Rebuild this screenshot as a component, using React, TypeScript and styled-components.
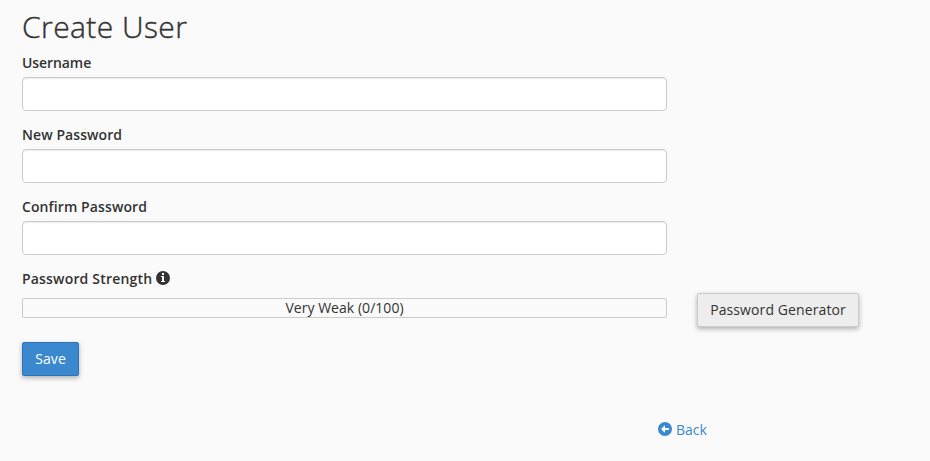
import React from "react";
import styled, { createGlobalStyle } from "styled-components";

const GlobalStyle = createGlobalStyle`
  *, *::before, *::after { box-sizing: border-box; }
  body {
    margin: 0;
    background: #fafafa;
    color: #333;
    font: 14px/20px "Open Sans", sans-serif;
  }
`;

const Page = styled.main`
  height: 461px;
  padding: 9px 22px 0;
  overflow: hidden;
`;

const Title = styled.h1`
  margin: 0 0 9px;
  font-size: 30px;
  line-height: 35px;
  font-weight: 300;
  letter-spacing: 0.42px;
  -webkit-text-stroke: 0.4px #333;
`;

const Field = styled.div`
  width: 645px;
  margin-bottom: 14px;
`;

const Label = styled.label<{ $tracking?: number }>`
  display: flex;
  align-items: center;
  gap: 4px;
  height: 20px;
  margin-bottom: 4px;
  font-weight: 600;
  letter-spacing: ${(p) => p.$tracking ?? 0}px;
`;

const Input = styled.input`
  display: block;
  width: 100%;
  height: 34px;
  padding: 6px 12px;
  border: 1px solid #ccc;
  border-radius: 4px;
  background: #fff;
  font: inherit;
  box-shadow: inset 0 1px 1px rgba(0, 0, 0, 0.075);
`;

const StrengthRow = styled.div`
  display: flex;
  align-items: flex-start;
  gap: 30px;
  height: 34px;
`;

const Meter = styled.div`
  width: 645px;
  height: 20px;
  margin-top: 5px;
  border: 1px solid #ccc;
  line-height: 18px;
  text-align: center;
  letter-spacing: 0.04px;
  border-radius: 2px;
`;

const Button = styled.button<{ $primary?: boolean }>`
  width: ${(p) => (p.$primary ? 57 : 162)}px;
  height: 34px;
  padding: 0;
  border: 1px solid ${(p) => (p.$primary ? "#2a74b8" : "#ccc")};
  border-radius: 2px;
  background: ${(p) => (p.$primary ? "#3a89cf" : "#ededed")};
  color: ${(p) => (p.$primary ? "#fff" : "#333")};
  font: inherit;
  letter-spacing: 0.1px;
  box-shadow: 0 2px 5px rgba(0, 0, 0, 0.3);
`;

const Actions = styled.div`
  margin-top: 15px;
`;

const Footer = styled.div`
  display: flex;
  margin: 44px 0 0 636px;
`;

const BackLink = styled.a`
  display: flex;
  align-items: center;
  gap: 4px;
  color: #3a89cf;
  text-decoration: none;
`;

const Glyph = styled.svg`
  display: block;
  width: 14px;
  height: 14px;
  margin-top: -2px;
  fill: currentColor;
`;

const InfoIcon = () => (
  <Glyph viewBox="0 0 14 14">
    <path fillRule="evenodd" d="M7 0a7 7 0 1 0 0 14A7 7 0 0 0 7 0zM6 2h2v2H6zM5 5h3v5h1v1H5v-1h1V6H5z" />
  </Glyph>
);

const BackIcon = () => (
  <Glyph viewBox="0 0 14 14">
    <path fillRule="evenodd" d="M7 0a7 7 0 1 0 0 14A7 7 0 0 0 7 0zM7 3.5V6h4v2H7v2.5H6.5L3 7l3.5-3.5z" />
  </Glyph>
);

export default function App() {
  return (
    <>
      <GlobalStyle />
      <Page>
        <Title>Create User</Title>
        <Field>
          <Label htmlFor="username" $tracking={-0.08}>Username</Label>
          <Input id="username" />
        </Field>
        <Field>
          <Label htmlFor="password" $tracking={0.08}>New Password</Label>
          <Input id="password" type="password" />
        </Field>
        <Field>
          <Label htmlFor="confirm" $tracking={0.1}>Confirm Password</Label>
          <Input id="confirm" type="password" />
        </Field>
        <Label as="div" $tracking={0.18}>
          Password Strength
          <InfoIcon />
        </Label>
        <StrengthRow>
          <Meter>Very Weak (0/100)</Meter>
          <Button type="button">Password Generator</Button>
        </StrengthRow>
        <Actions>
          <Button type="submit" $primary>Save</Button>
        </Actions>
        <Footer>
          <BackLink href="#">
            <BackIcon />
            Back
          </BackLink>
        </Footer>
      </Page>
    </>
  );
}
